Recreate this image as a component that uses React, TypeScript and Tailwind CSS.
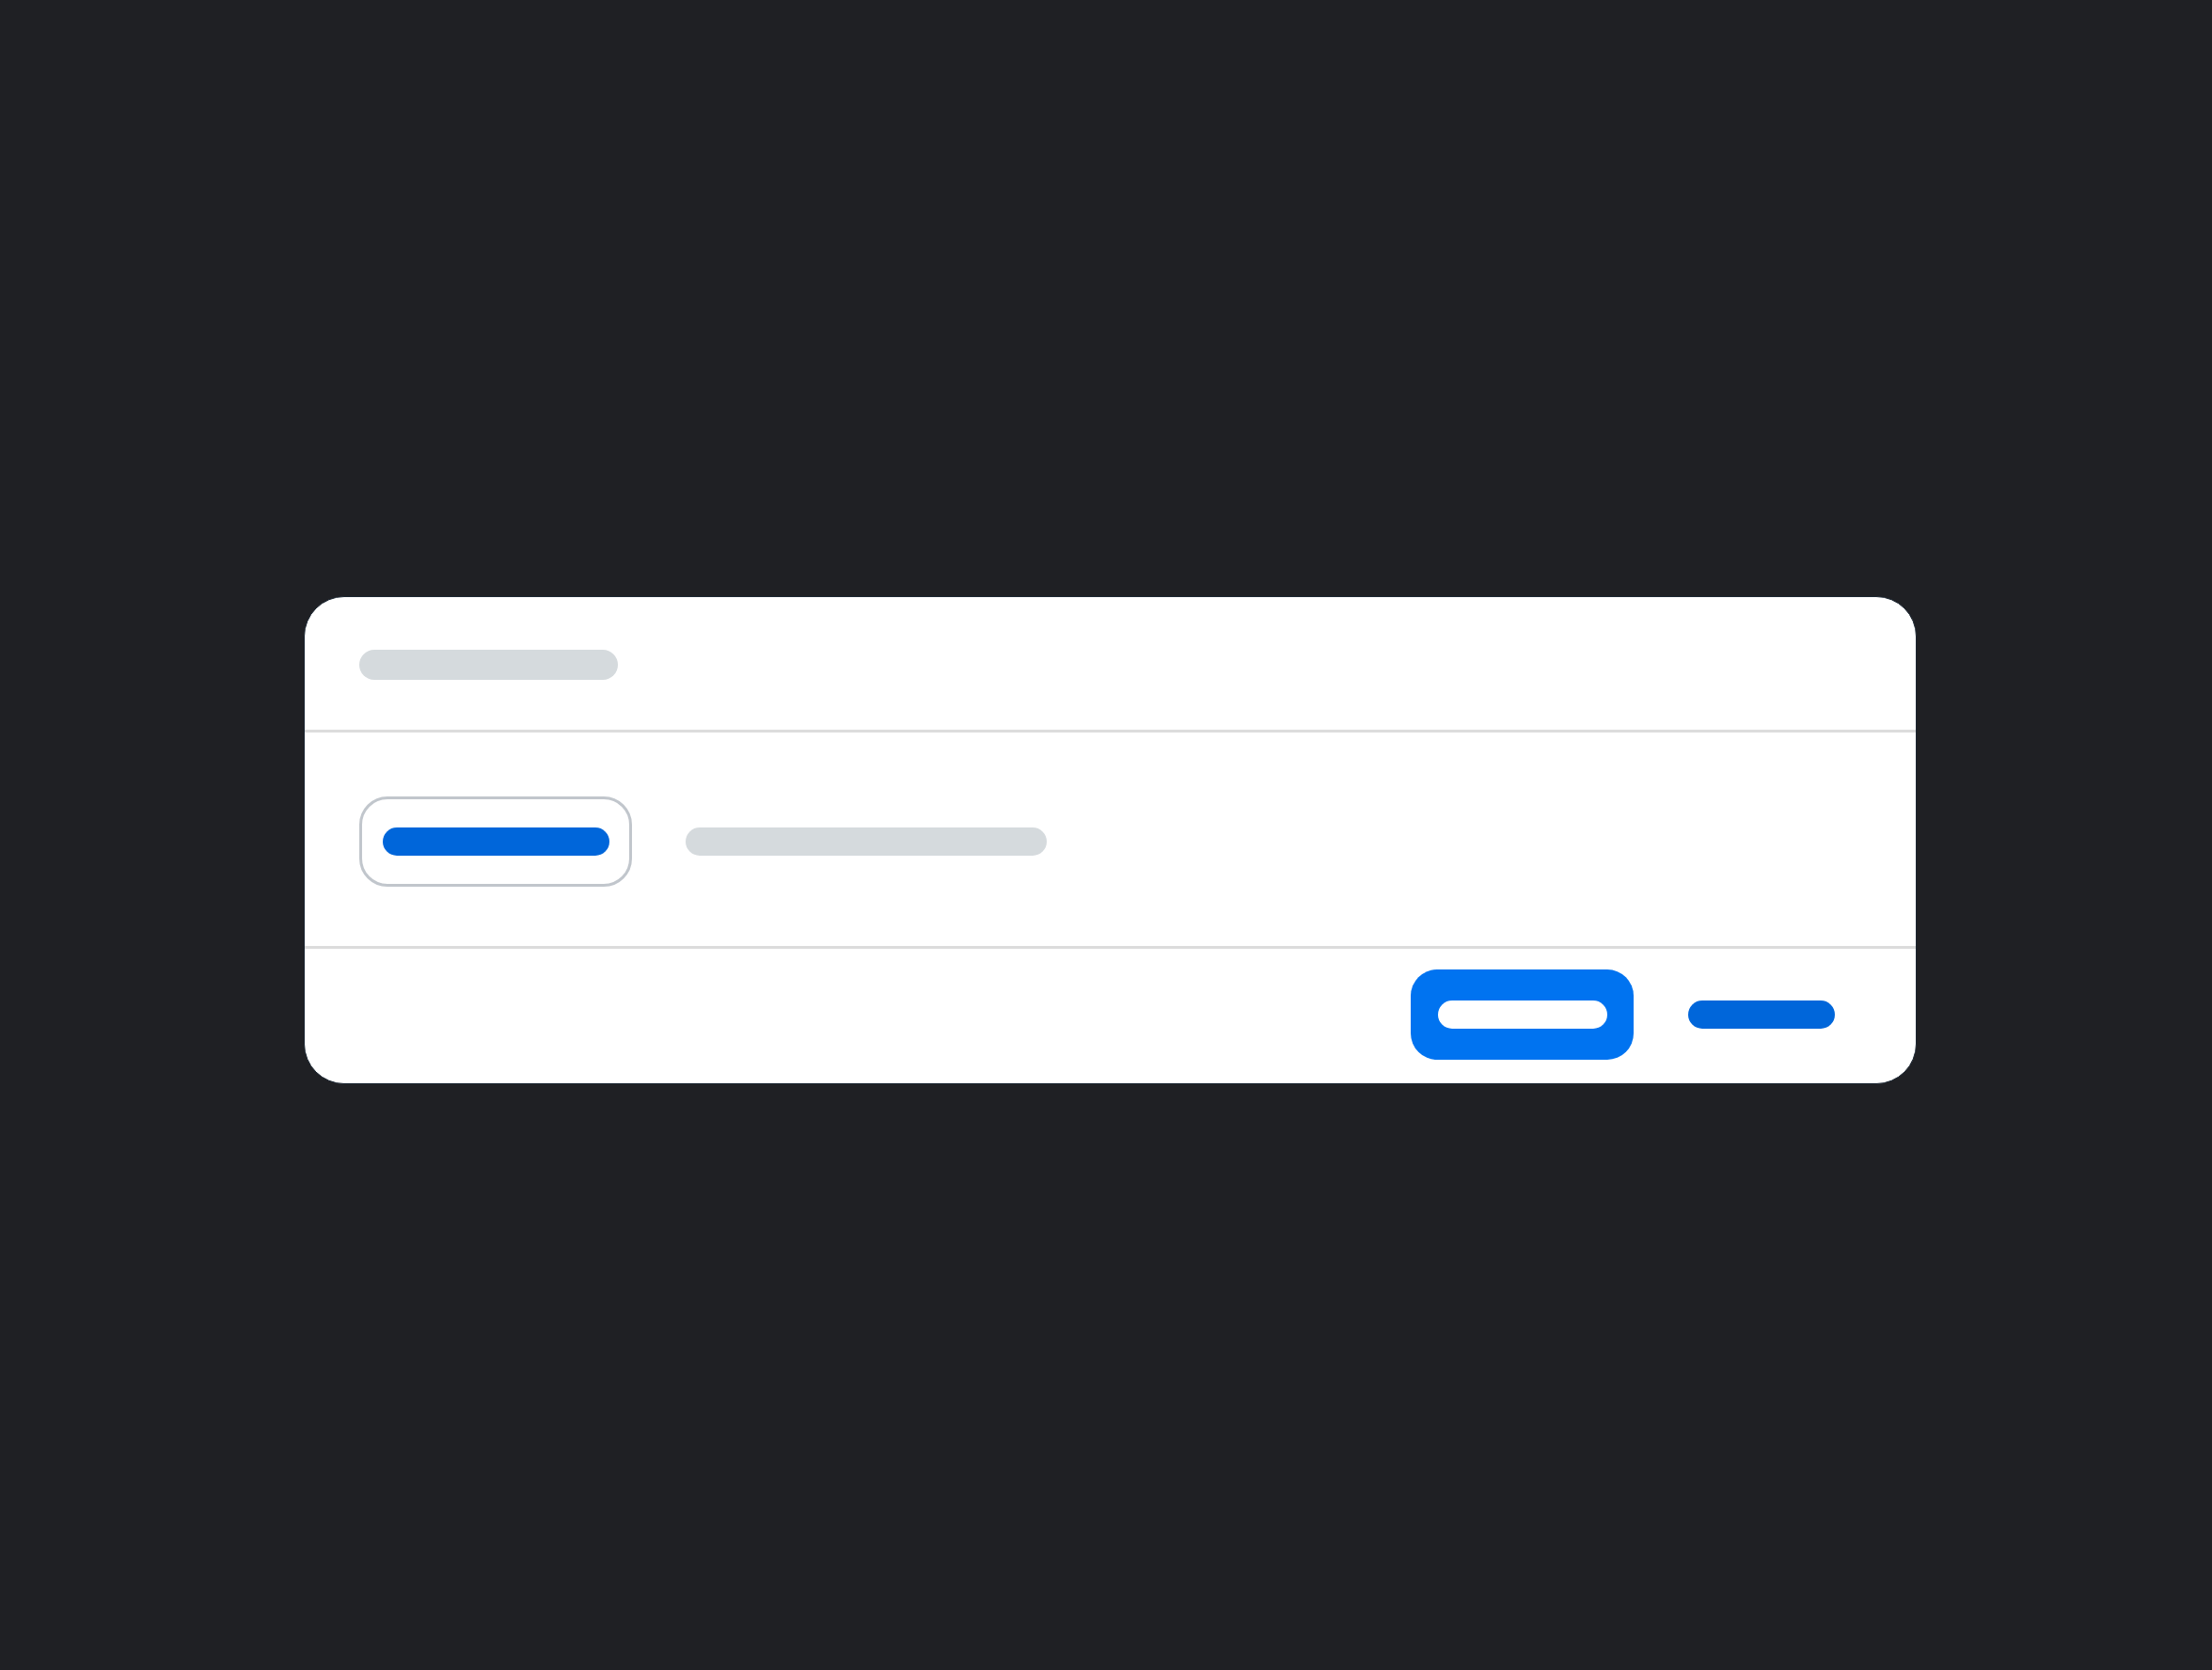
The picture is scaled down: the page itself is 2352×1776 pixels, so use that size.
import React from "react";

export default function App() {
  return (
    <div className="w-full h-[1776px] bg-[#1f2024] pt-[634px] pl-[323px]">
      <div className="w-[1715px] h-[519px] rounded-[43px] bg-white border border-[#1c2733] overflow-hidden flex flex-col">
        <div className="h-[141px] flex items-center pl-[58px] pt-[3px] shrink-0">
          <div className="w-[275px] h-[32px] rounded-full bg-[#d5dadd]" />
        </div>
        <div className="h-[3px] bg-[#dcdcdc] shrink-0" />
        <div className="h-[227px] flex items-start pl-[58px] pt-[68px] shrink-0">
          <div className="flex items-center">
            <div className="w-[290px] h-[96px] border-[3px] border-[#c1c6cc] rounded-[30px] flex items-center justify-center">
              <div className="w-[241px] h-[30px] rounded-full bg-[#0066da]" />
            </div>
            <div className="ml-[57px] w-[384px] h-[30px] rounded-full bg-[#d5dadd]" />
          </div>
        </div>
        <div className="h-[3px] bg-[#dcdcdc] shrink-0" />
        <div className="flex-1 flex justify-end items-start pt-[22px] pr-[86px]">
          <div className="flex items-center gap-[58px]">
            <div className="w-[237px] h-[96px] rounded-[28px] bg-[#0073f0] flex items-center justify-center">
              <div className="w-[180px] h-[30px] rounded-full bg-white" />
            </div>
            <div className="w-[156px] h-[30px] rounded-full bg-[#0066da]" />
          </div>
        </div>
      </div>
    </div>
  );
}
